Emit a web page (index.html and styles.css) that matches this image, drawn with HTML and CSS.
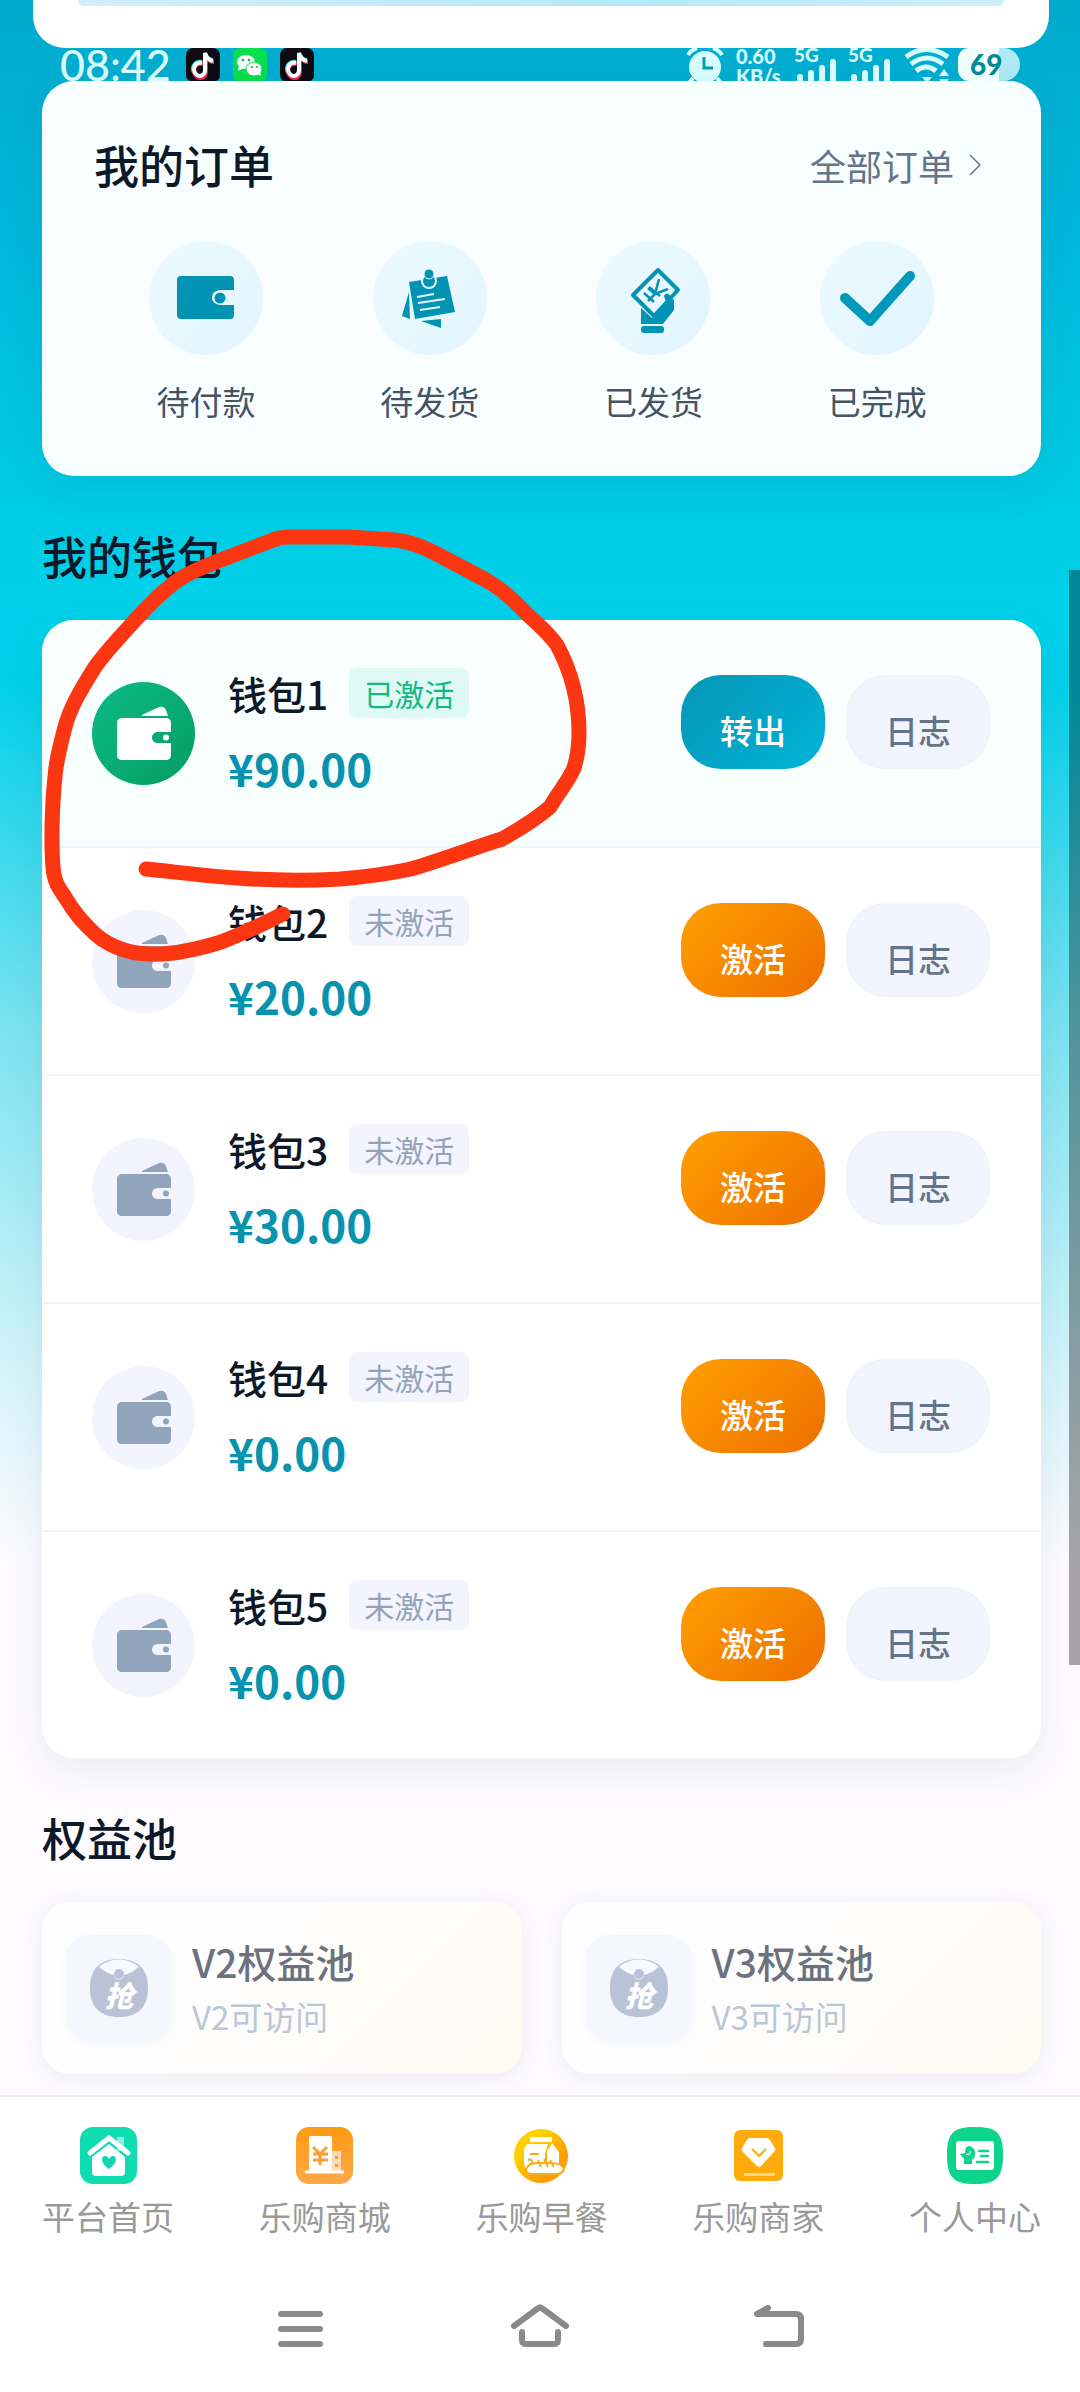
FILE: index.html
```html
<!DOCTYPE html>
<html lang="zh-CN">
<head>
<meta charset="utf-8">
<meta name="viewport" content="width=device-width">
<title>个人中心</title>
<link rel="stylesheet" href="styles.css">
</head>
<body>
<svg class="sprite" aria-hidden="true">
  <symbol id="wallet" viewBox="0 0 54 54">
    <path d="M25 9 42 1c3-1 6 0 7 3l2 6H25z"/>
    <path fill-rule="evenodd" d="M5 12h44c3 0 5 2 5 5v9H41c-8 0-8 11 0 11h13v12c0 3-2 5-5 5H5c-3 0-5-2-5-5V17c0-3 2-5 5-5z"/>
    <circle cx="49" cy="31.500" r="3"/>
  </symbol>
  <symbol id="douyin" viewBox="0 0 34 34">
    <rect width="34" height="34" rx="7" fill="#0c0b12"/>
    <g fill="none" stroke-width="4">
      <path stroke="#35e6e2" d="M16 14c-5-1-9 2-9 7 0 4 3 7 6 7 4 0 6-3 6-6V5c1 4 4 7 8 7"/>
      <path stroke="#f5315a" d="M17 16c-5-1-9 2-9 7 0 4 3 7 6 7 4 0 6-3 6-6V7c1 4 4 7 8 7"/>
      <path stroke="#fff" d="M16 15c-5-1-8 2-8 6 0 4 3 7 6 7s5-3 5-6V5c1 4 4 7 8 8"/>
    </g>
  </symbol>
  <symbol id="signal" viewBox="0 0 42 34">
    <path stroke="currentColor" stroke-width="6" stroke-linecap="round" d="M4 29v10M15 25v14M26 20v18M37 14v24"/>
  </symbol>
  <symbol id="grab" viewBox="0 0 58 58">
    <path d="M29 0C48 0 58 10 58 29S48 58 29 58 0 48 0 29 10 0 29 0z" fill="#8c9dbe"/>
    <path d="M9 8C20-2 38-2 49 8c-5 4-10 7-15 8 0 6-10 6-10 0-5-1-10-4-15-8z" fill="#f6f8ff"/>
    <circle cx="29" cy="15" r="5" fill="#8c9dbe"/>
  </symbol>
</svg>

<header class="profile"><div class="profile-banner"></div></header>

<div class="status">
  <span class="clock">08:42</span>
  <div class="status-apps">
    <svg class="app"><use href="#douyin"/></svg>
    <svg class="app" viewBox="0 0 34 34"><rect width="34" height="34" rx="7" fill="#07df4f"/><g fill="#fff"><ellipse cx="13" cy="14" rx="9" ry="7"/><path d="m6 18-1 5 6-3z"/><ellipse cx="21" cy="21" rx="8" ry="7" stroke="#07df4f"/><path d="m24 26 4 2-1-5z"/></g><g fill="#07b544"><circle cx="10" cy="12" r="1.300"/><circle cx="16" cy="12" r="1.300"/><circle cx="19" cy="19" r="1"/><circle cx="24" cy="19" r="1"/></g></svg>
    <svg class="app"><use href="#douyin"/></svg>
  </div>
  <div class="status-info">
    <svg class="alarm" viewBox="0 0 38 34"><circle cx="19" cy="19" r="16" fill="currentColor"/><path d="M2 7q3-5 9-7M36 7q-3-5-9-7M7 30l-4 5M31 30l4 5" fill="none" stroke="currentColor" stroke-width="4"/><path d="M18 9v11h9" fill="none" stroke="#069fae" stroke-width="3"/></svg>
    <span class="speed">0.60<br>KB/s</span>
    <div class="cell"><span>5G</span><svg><use href="#signal"/></svg></div>
    <div class="cell"><span>5G</span><svg><use href="#signal"/></svg></div>
    <svg class="wifi" viewBox="0 0 46 34"><g fill="none" stroke="currentColor" stroke-width="5"><path d="M2 9q20-15 42 0M7 16q16-12 32 0M12 23q10-8 20 0"/></g><path d="M18 29h10l-5 6zM35 28l5-7 5 7zM35 31h10l-5 5z" fill="currentColor"/></svg>
    <div class="battery">69</div>
  </div>
</div>

<main class="page">
  <section class="card orders">
    <div class="orders-head">
      <h2>我的订单</h2>
      <a class="all" href="#orders">全部订单<svg viewBox="0 0 12 22"><path d="m1 1 10 10L1 21" fill="none" stroke="currentColor" stroke-width="1.500"/></svg></a>
    </div>
    <nav class="order-list">
      <a href="#unpaid"><span class="order-icon"><svg viewBox="0 0 84 84"><path fill-rule="evenodd" d="M17 20h49q4 0 4 4v10H57c-12 0-12 15 0 15h13v10q0 4-4 4H17q-4 0-4-4V24q0-4 4-4z"/><circle cx="56" cy="42" r="5.500"/></svg></span>待付款</a>
      <a href="#unshipped"><span class="order-icon"><svg viewBox="0 0 84 84"><path d="M21 36 14 60l8 3zM33 65l20-2v9z"/><path d="m21 26 38-6 8 36-40 7z"/><circle cx="41" cy="25" r="8" fill="#e9f7ff"/><circle cx="41" cy="25" r="6"/><circle cx="41" cy="18" r="5" stroke="#e9f7ff"/><path d="m29 41 17-3M30 47l27-4M32 54l20-3" stroke="#e9f7ff" stroke-width="2"/></svg></span>待发货</a>
      <a href="#shipped"><span class="order-icon"><svg viewBox="0 0 84 84"><path d="M30 52v16h22l11-14V44l-6-6-5 4 1 9-12 11z"/><rect x="30" y="70" width="23" height="7" rx="3"/><path d="M47 14 67 34 43 60 22 39z" fill="#eaf7ff" stroke="#0093b4" stroke-width="4" stroke-linejoin="round"/><path d="M53 40q2-5 7 0l2 9-9 11-7 1 10-12z"/><path d="m48 23-4 15 13-5M44 38l-7-6m7 6-7 7M33 37l10 9M38 31l11 9" fill="none" stroke="#0093b4" stroke-width="2.500"/></svg></span>已发货</a>
      <a href="#completed"><span class="order-icon"><svg viewBox="0 0 84 84"><path d="M10 42 35 65 75 20" fill="none" stroke="#0099b9" stroke-width="10" stroke-linecap="round" stroke-linejoin="round"/></svg></span>已完成</a>
    </nav>
  </section>

  <h2 class="section-title">我的钱包</h2>
  <section class="card wallets">
    <article class="wallet active">
      <span class="wallet-icon"><svg><use href="#wallet"/></svg></span>
      <div class="wallet-info"><h3>钱包1 <span class="tag">已激活</span></h3><p>¥90.00</p></div>
      <div class="actions"><button class="btn transfer">转出</button><button class="btn log">日志</button></div>
    </article>
    <article class="wallet">
      <span class="wallet-icon"><svg><use href="#wallet"/></svg></span>
      <div class="wallet-info"><h3>钱包2 <span class="tag">未激活</span></h3><p>¥20.00</p></div>
      <div class="actions"><button class="btn activate">激活</button><button class="btn log">日志</button></div>
    </article>
    <article class="wallet">
      <span class="wallet-icon"><svg><use href="#wallet"/></svg></span>
      <div class="wallet-info"><h3>钱包3 <span class="tag">未激活</span></h3><p>¥30.00</p></div>
      <div class="actions"><button class="btn activate">激活</button><button class="btn log">日志</button></div>
    </article>
    <article class="wallet">
      <span class="wallet-icon"><svg><use href="#wallet"/></svg></span>
      <div class="wallet-info"><h3>钱包4 <span class="tag">未激活</span></h3><p>¥0.00</p></div>
      <div class="actions"><button class="btn activate">激活</button><button class="btn log">日志</button></div>
    </article>
    <article class="wallet">
      <span class="wallet-icon"><svg><use href="#wallet"/></svg></span>
      <div class="wallet-info"><h3>钱包5 <span class="tag">未激活</span></h3><p>¥0.00</p></div>
      <div class="actions"><button class="btn activate">激活</button><button class="btn log">日志</button></div>
    </article>
  </section>

  <h2 class="section-title">权益池</h2>
  <section class="pools">
    <a class="pool" href="#v2">
      <span class="pool-icon"><svg viewBox="0 0 58 58"><use href="#grab"/><text x="29" y="48" class="grab-text">抢</text></svg></span>
      <span class="pool-text"><strong>V2权益池</strong><span>V2可访问</span></span>
    </a>
    <a class="pool" href="#v3">
      <span class="pool-icon"><svg viewBox="0 0 58 58"><use href="#grab"/><text x="29" y="48" class="grab-text">抢</text></svg></span>
      <span class="pool-text"><strong>V3权益池</strong><span>V3可访问</span></span>
    </a>
  </section>
</main>

<footer class="bottom">
  <nav class="tabs">
    <a href="#home"><svg viewBox="0 0 57 57"><rect width="57" height="57" rx="13" fill="#0fdcb0"/><rect x="37" y="10" width="7" height="14" fill="#8df0da"/><path d="m10 26 19-15 19 15" fill="none" stroke="#fff" stroke-width="5" stroke-linecap="round"/><path d="m29 17 16 13v15q0 4-4 4H16q-4 0-4-4V30z" fill="#fff"/><path d="M29 42c-9-6-8-13-4-13 2 0 3 1 4 3 1-2 2-3 4-3 4 0 5 7-4 13z" fill="#12d7ac"/></svg>平台首页</a>
    <a href="#mall"><svg viewBox="0 0 57 57"><defs><linearGradient id="mall-bg" x2="0" y2="1"><stop stop-color="#ff9a12"/><stop offset="1" stop-color="#ffa84a"/></linearGradient></defs><rect width="57" height="57" rx="13" fill="url(#mall-bg)"/><path d="M36 24h9v20h-9z" fill="#ffdcb5"/><path d="M13 11q0-2 2-2h19q2 0 2 2v33H13z" fill="#fff"/><path d="M9 45h39" stroke="#fff" stroke-width="3"/><path d="m17 20 7 7 7-7M17 27h15M17 33h15M24 27v11" fill="none" stroke="#ff9c35" stroke-width="3"/><path d="M39 29h3v3h-3zM39 37h3v3h-3z" fill="#ff9c35"/></svg>乐购商城</a>
    <a href="#breakfast"><svg viewBox="0 0 57 57"><defs><linearGradient id="meal-bg" x2="1" y2="1"><stop offset=".3" stop-color="#ffd000"/><stop offset=".7" stop-color="#ff9c00"/></linearGradient></defs><circle cx="28" cy="29" r="27" fill="url(#meal-bg)"/><path d="M17 10h22v5H17z" fill="#fff"/><path d="M15 17h20l-3 9v12l-17 4q-4-1-4-6V24q0-5 4-7z" fill="#fff"/><path d="m39 16 7 9v12H34V24z" fill="#fff"/><path d="M17 27h9M15 33q5-2 4 5" fill="none" stroke="#f5a623" stroke-width="2"/><path d="M13 43q2-8 13-7h10q14 0 15 6-1 5-9 5H19q-6 0-6-4z" fill="#fff" stroke="#f9ac1b" stroke-width="2"/><path d="m25 33 3 7M31 32l4 8M37 33l4 7" stroke="#f9ac1b" stroke-width="2"/></svg>乐购早餐</a>
    <a href="#merchant"><svg viewBox="0 0 57 57"><rect x="4" y="3" width="49" height="51" rx="6" fill="#ffab0c"/><path d="M20 11h17q2 0 3 2l5 8q1 2-1 4L31 39q-2 2-4 0L13 25q-2-2-1-4l5-8q1-2 3-2z" fill="#fff"/><path d="m22 22 7 7 7-7" fill="none" stroke="#ffab0c" stroke-width="2"/><rect x="14" y="46" width="31" height="3" rx="1" fill="#ffd78a"/></svg>乐购商家</a>
    <a href="#me"><svg viewBox="0 0 57 57"><path d="M28 0c22 0 28 6 28 28s-6 29-28 29S0 50 0 28 6 0 28 0z" fill="#0cd48b"/><rect x="9" y="14" width="38" height="29" rx="3" fill="#fff"/><path d="M17 37v-5l-4-5 5-1q0-8 5-7 6 3 5 9 0 3-3 5v4z" fill="#0cd48b"/><path d="M19 27q5 2 4-3" fill="none" stroke="#fff" stroke-width="1"/><path d="M32 24h9M34 29h7M30 35h11" stroke="#0cd48b" stroke-width="2.500" stroke-linecap="round"/></svg>个人中心</a>
  </nav>
  <div class="system">
    <button aria-label="最近任务"><svg viewBox="0 0 60 52"><path d="M11 10h39M11 25h39M11 40h39"/></svg></button>
    <button aria-label="主屏幕"><svg viewBox="0 0 60 52"><path d="M4 22 27 5q3-3 6 0l23 17M12 28v8q0 4 4 4h28q4 0 4-4v-8"/></svg></button>
    <button aria-label="返回"><svg viewBox="0 0 60 52"><path d="M18 4 7 10h39q5 0 5 5v20q0 5-5 5H16"/></svg></button>
  </div>
</footer>

<div class="scroll-thumb"></div>
<svg class="marker" viewBox="0 0 600 500" aria-hidden="true"><path d="M146 369C176 372 206 376 237 378C265 380 305 381 340 379C365 377 387 374 411 369C445 359 470 349 502 339C520 329 536 319 550 307C560 290 568 282 574 268C578 255 579 245 579 233C579 213 576 180 557 145C547 131 537 124 526 113C513 99 500 88 486 80L435 53C421 46 408 41 395 40L348 37H289Q280 37 273 40L213 63C198 69 184 75 174 83C160 94 149 105 138 117C120 137 107 150 95 167C80 191 70 208 65 227C59 250 56 262 55 277C52 305 51 343 53 367C54 382 59 388 65 397C75 414 83 422 91 430C103 443 125 454 150 454C168 455 195 450 221 442C245 433 265 423 283 414"/></svg>
</body>
</html>
```
FILE: styles.css
```css
* { box-sizing: border-box; }

body {
  position: relative;
  margin: 0;
  min-height: 100vh;
  font-family: "Noto Sans CJK SC", sans-serif;
  color: #0d1828;
  background: #fdfbff linear-gradient(180deg, #00aacc 0, #00aed1 80px, #00b9dc 260px, #00c9e2 460px, #00d0e9 600px, #00d0e9 680px, #7fe3f0 1040px, #d6f4fa 1380px, #fdfbff 1560px) no-repeat;
}

h2, h3, p { margin: 0; }
a { color: inherit; text-decoration: none; }
button { border: 0; padding: 0; background: none; font: inherit; }
.sprite { position: absolute; width: 0; height: 0; }

h2 { font-size: 45px; line-height: 60px; font-weight: 500; }

.profile {
  margin: 0 31px 0 33px;
  height: 48px;
  padding: 0 45px;
  background: #fff;
  border-radius: 0 0 32px 32px;
}
.profile-banner { height: 6px; border-radius: 0 0 20px 20px; background: linear-gradient(90deg, #d3edfb, #b3e9fd 60%, #cdeefc); }

.status {
  display: flex;
  align-items: center;
  height: 33px;
  padding: 0 60px;
  color: #d9fdff;
  font-family: Lato, sans-serif;
}
.clock { font-size: 43px; line-height: 33px; font-weight: 500; width: 126px; }
.status-apps { display: flex; gap: 13px; }
.app { width: 34px; height: 34px; }
.status-info { display: flex; gap: 12px; margin-left: auto; height: 33px; font-weight: 900; }
.alarm { width: 38px; height: 34px; }
.speed { width: 48px; font-size: 20px; line-height: 20px; margin-top: -2px; }
.cell { position: relative; width: 42px; height: 33px; }
.cell span { position: absolute; left: -2px; top: -3px; font-size: 19px; line-height: 20px; }
.cell svg { width: 42px; height: 34px; }
.wifi { width: 46px; height: 34px; }
.battery {
  width: 62px;
  margin-left: -4px;
  padding-left: 12px;
  border-radius: 16px 24px 24px 16px;
  background: linear-gradient(90deg, #f1ffff 66%, #aeeaf5 66%);
  color: #008a99;
  font-size: 28px;
  line-height: 33px;
}

.page { position: relative; padding: 0 39px 21px 42px; }
.card { border-radius: 32px; background: #fff; box-shadow: 0 12px 40px rgba(30, 50, 90, .08); }

.orders { padding: 54px 52px 51px; background: linear-gradient(180deg, #f7ffff, #f9fdff 50%, #f8ffff); }
.orders-head { display: flex; justify-content: space-between; align-items: center; }
.all { display: flex; align-items: center; gap: 15px; padding-right: 8px; font-size: 36px; line-height: 60px; color: #64748b; }
.all svg { width: 12px; height: 22px; }
.order-list { display: grid; grid-template-columns: repeat(4, 1fr); margin-top: 46px; }
.order-list a { display: grid; justify-items: center; gap: 22px; font-size: 33px; line-height: 48px; color: #475262; }
.order-icon { display: grid; place-items: center; width: 114px; height: 114px; border-radius: 50%; background: linear-gradient(135deg, #ecfbff, #e3f4ff); }
.order-icon svg { width: 84px; height: 84px; fill: #0093b4; }

.section-title { margin: 50px 0 34px; }

.wallet { display: flex; align-items: center; padding: 0 51px 0 50px; height: 226px; }
.wallet + .wallet { height: 228px; border-top: 2px solid #f4f5f8; }
.wallet:first-child { border-radius: 32px 32px 0 0; background: linear-gradient(180deg, #fbffff, #f6fffd); }
.wallet-icon { display: grid; place-items: center; width: 103px; height: 103px; border-radius: 50%; background: #f3f4fe; }
.wallet-icon svg { width: 54px; height: 54px; fill: #90a4bc; }
.active .wallet-icon { background: linear-gradient(135deg, #0cbd84, #069b65); }
.active .wallet-icon svg { fill: #fff; }
.wallet-info { flex: 1; margin-left: 33px; }
.wallet h3 { display: flex; align-items: center; gap: 21px; font-size: 39px; line-height: 50px; font-weight: 500; }
.tag { padding: 0 15px; border-radius: 8px; background: #f3f4fd; color: #94a3b8; font-size: 30px; font-weight: 400; }
.active .tag { background: #dff9f4; color: #10b981; }
.wallet p { margin-top: 20px; font-size: 44px; line-height: 60px; font-weight: 600; color: #0793ae; }
.actions { display: flex; gap: 21px; padding-bottom: 22px; }
.btn { width: 144px; height: 94px; padding-top: 15px; border-radius: 40px; font-size: 33px; line-height: 48px; font-weight: 500; color: #fff; }
.transfer { background: linear-gradient(135deg, #0795b5, #00b4d8); }
.activate { background: linear-gradient(135deg, #ff9f00, #ee6f00); }
.log { background: #f2f5fe; border: 2px solid #f0f2fc; color: #64748b; }

.pools { display: grid; grid-template-columns: 1fr 1fr; gap: 40px; }
.pool {
  display: flex;
  align-items: center;
  gap: 20px;
  height: 172px;
  padding: 0 24px;
  border-radius: 28px;
  background: linear-gradient(135deg, #fff 30%, #fffbea);
  box-shadow: 0 4px 20px rgba(30, 60, 110, .12);
  opacity: .6;
}
.pool-icon { display: grid; place-items: center; width: 106px; height: 106px; border-radius: 24px; background: #f1f5ff; box-shadow: 0 4px 12px rgba(60, 80, 140, .05); }
.pool-icon svg { width: 58px; height: 58px; }
.grab-text { font-size: 29px; font-weight: 900; font-style: italic; text-anchor: middle; fill: #fff; }
.pool-text { display: grid; font-size: 33px; line-height: 50px; padding-bottom: 4px; color: #94a3b8; }
.pool-text strong { font-size: 39px; line-height: 60px; font-weight: 500; color: #0d1828; }

.bottom { border-top: 2px solid #ededf0; background: #fff; }
.tabs { display: flex; justify-content: space-between; padding: 30px 39px 0 42px; }
.tabs a { display: grid; justify-items: center; gap: 9px; font-size: 33px; line-height: 46px; color: #999; }
.tabs svg { width: 57px; height: 57px; }
.system { display: flex; justify-content: center; gap: 180px; padding: 65px 0 36px; }
.system svg { display: block; width: 60px; height: 52px; fill: none; stroke: #8a8a8a; stroke-width: 6px; stroke-linecap: round; stroke-linejoin: round; }

.scroll-thumb { position: absolute; top: 570px; right: 0; width: 11px; height: 1095px; background: rgba(0, 0, 0, .35); }
.marker { position: absolute; top: 500px; left: 0; width: 600px; height: 500px; fill: none; stroke: #fb3610; stroke-width: 15px; stroke-linecap: round; stroke-linejoin: round; pointer-events: none; }
```
